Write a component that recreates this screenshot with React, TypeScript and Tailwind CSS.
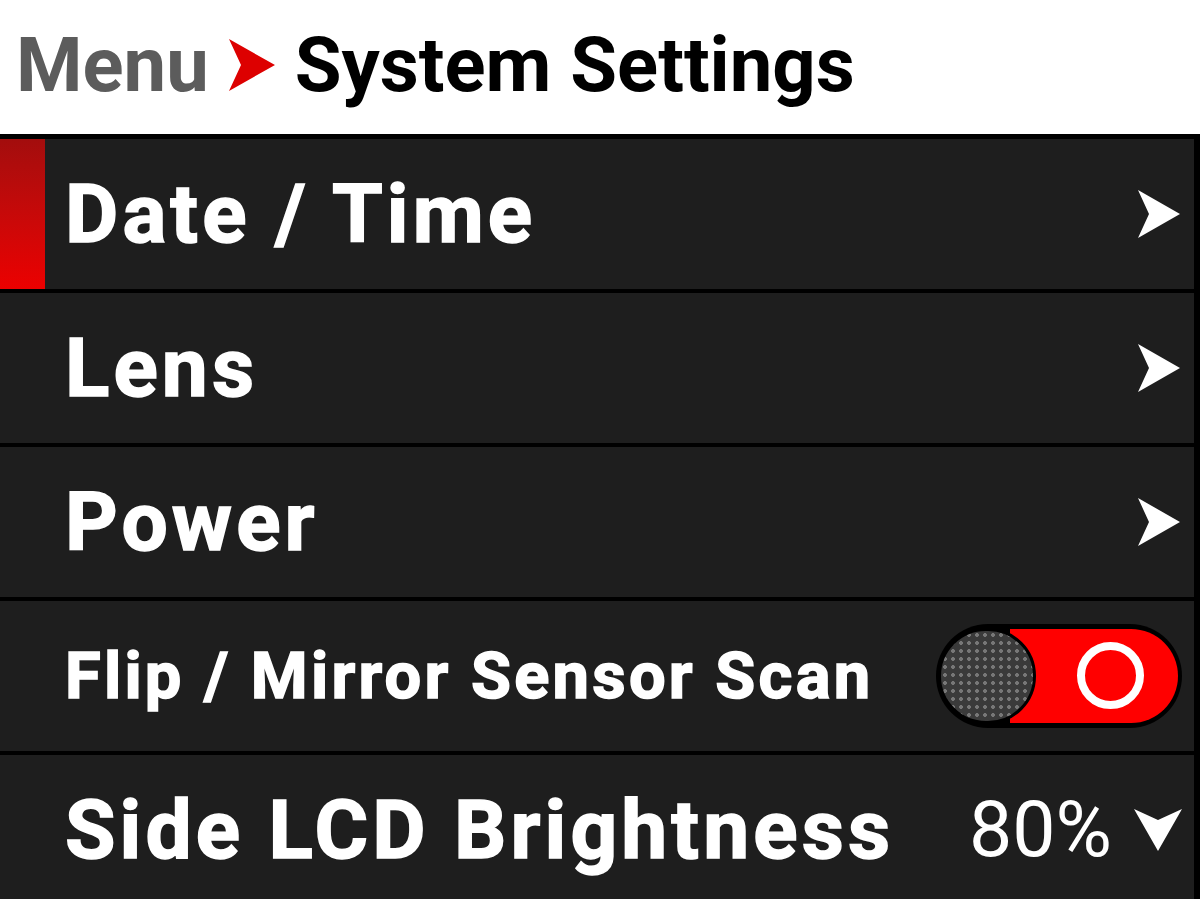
import React from 'react';

const font = { fontFamily: 'Roboto, "Liberation Sans", sans-serif' };

function RightArrow() {
  return (
    <svg width="46" height="48" viewBox="0 0 46 48" className="shrink-0">
      <path d="M2 0 L44 24 L2 48 L13 24 Z" fill="#fff" />
    </svg>
  );
}

function DownArrow() {
  return (
    <svg width="48" height="46" viewBox="0 0 48 46" className="shrink-0">
      <path d="M0 2 L24 13 L48 2 L24 44 Z" fill="#fff" />
    </svg>
  );
}

function Toggle() {
  return (
    <div className="relative w-[246px] h-[104px] rounded-full bg-black shrink-0">
      <div className="absolute left-[74px] right-[4px] top-[5px] bottom-[5px] rounded-r-full bg-[#ff0000]" />
      <div className="absolute left-[141px] top-[18px] w-[67px] h-[67px] rounded-full border-[8px] border-white" />
      <div
        className="absolute left-[2px] top-[4px] w-[98px] h-[96px] rounded-full bg-[#3a3a3a] border-[3px] border-black"
        style={{
          backgroundImage: 'radial-gradient(circle, #777 1.6px, transparent 2.2px)',
          backgroundSize: '8px 8px',
        }}
      />
    </div>
  );
}

function Row({ label, small, right, active }: { label: string; small?: boolean; right: React.ReactNode; active?: boolean }) {
  return (
    <div className="relative h-[150px] shrink-0 bg-[#1e1e1e] flex items-center pl-[65px] pr-[12px]">
      {active && <div className="absolute left-0 top-0 bottom-0 w-[45px] bg-gradient-to-b from-[#a30d0d] to-[#ec0000]" />}
      <span
        className={`flex-1 font-bold text-white leading-none tracking-[0.05em] [-webkit-text-stroke:1.5px_white] ${small ? 'text-[65px]' : 'text-[82px]'}`}
      >
        {label}
      </span>
      {right}
    </div>
  );
}

export default function App() {
  return (
    <div className="w-[1200px] h-[899px] overflow-hidden flex flex-col bg-black" style={font}>
      <div className="h-[134px] shrink-0 bg-white flex items-center pl-[16px] pb-[4px] gap-[20px]">
        <span className="text-[76px] font-bold text-[#5c5c5c] leading-none">Menu</span>
        <svg width="46" height="52" viewBox="0 0 46 52">
          <path d="M0 0 L46 26 L0 52 L12 26 Z" fill="#dd0000" />
        </svg>
        <span className="text-[76px] font-bold text-black leading-none">System Settings</span>
      </div>
      <div className="flex-1 flex flex-col gap-[4px] pt-[5px] pr-[6px] overflow-hidden">
        <Row label="Date / Time" active right={<RightArrow />} />
        <Row label="Lens" right={<RightArrow />} />
        <Row label="Power" right={<RightArrow />} />
        <Row label="Flip / Mirror Sensor Scan" small right={<Toggle />} />
        <Row
          label="Side LCD Brightness"
          right={
            <div className="flex items-center gap-[22px]">
              <span className="text-[77px] text-white leading-none">80%</span>
              <DownArrow />
            </div>
          }
        />
      </div>
    </div>
  );
}
